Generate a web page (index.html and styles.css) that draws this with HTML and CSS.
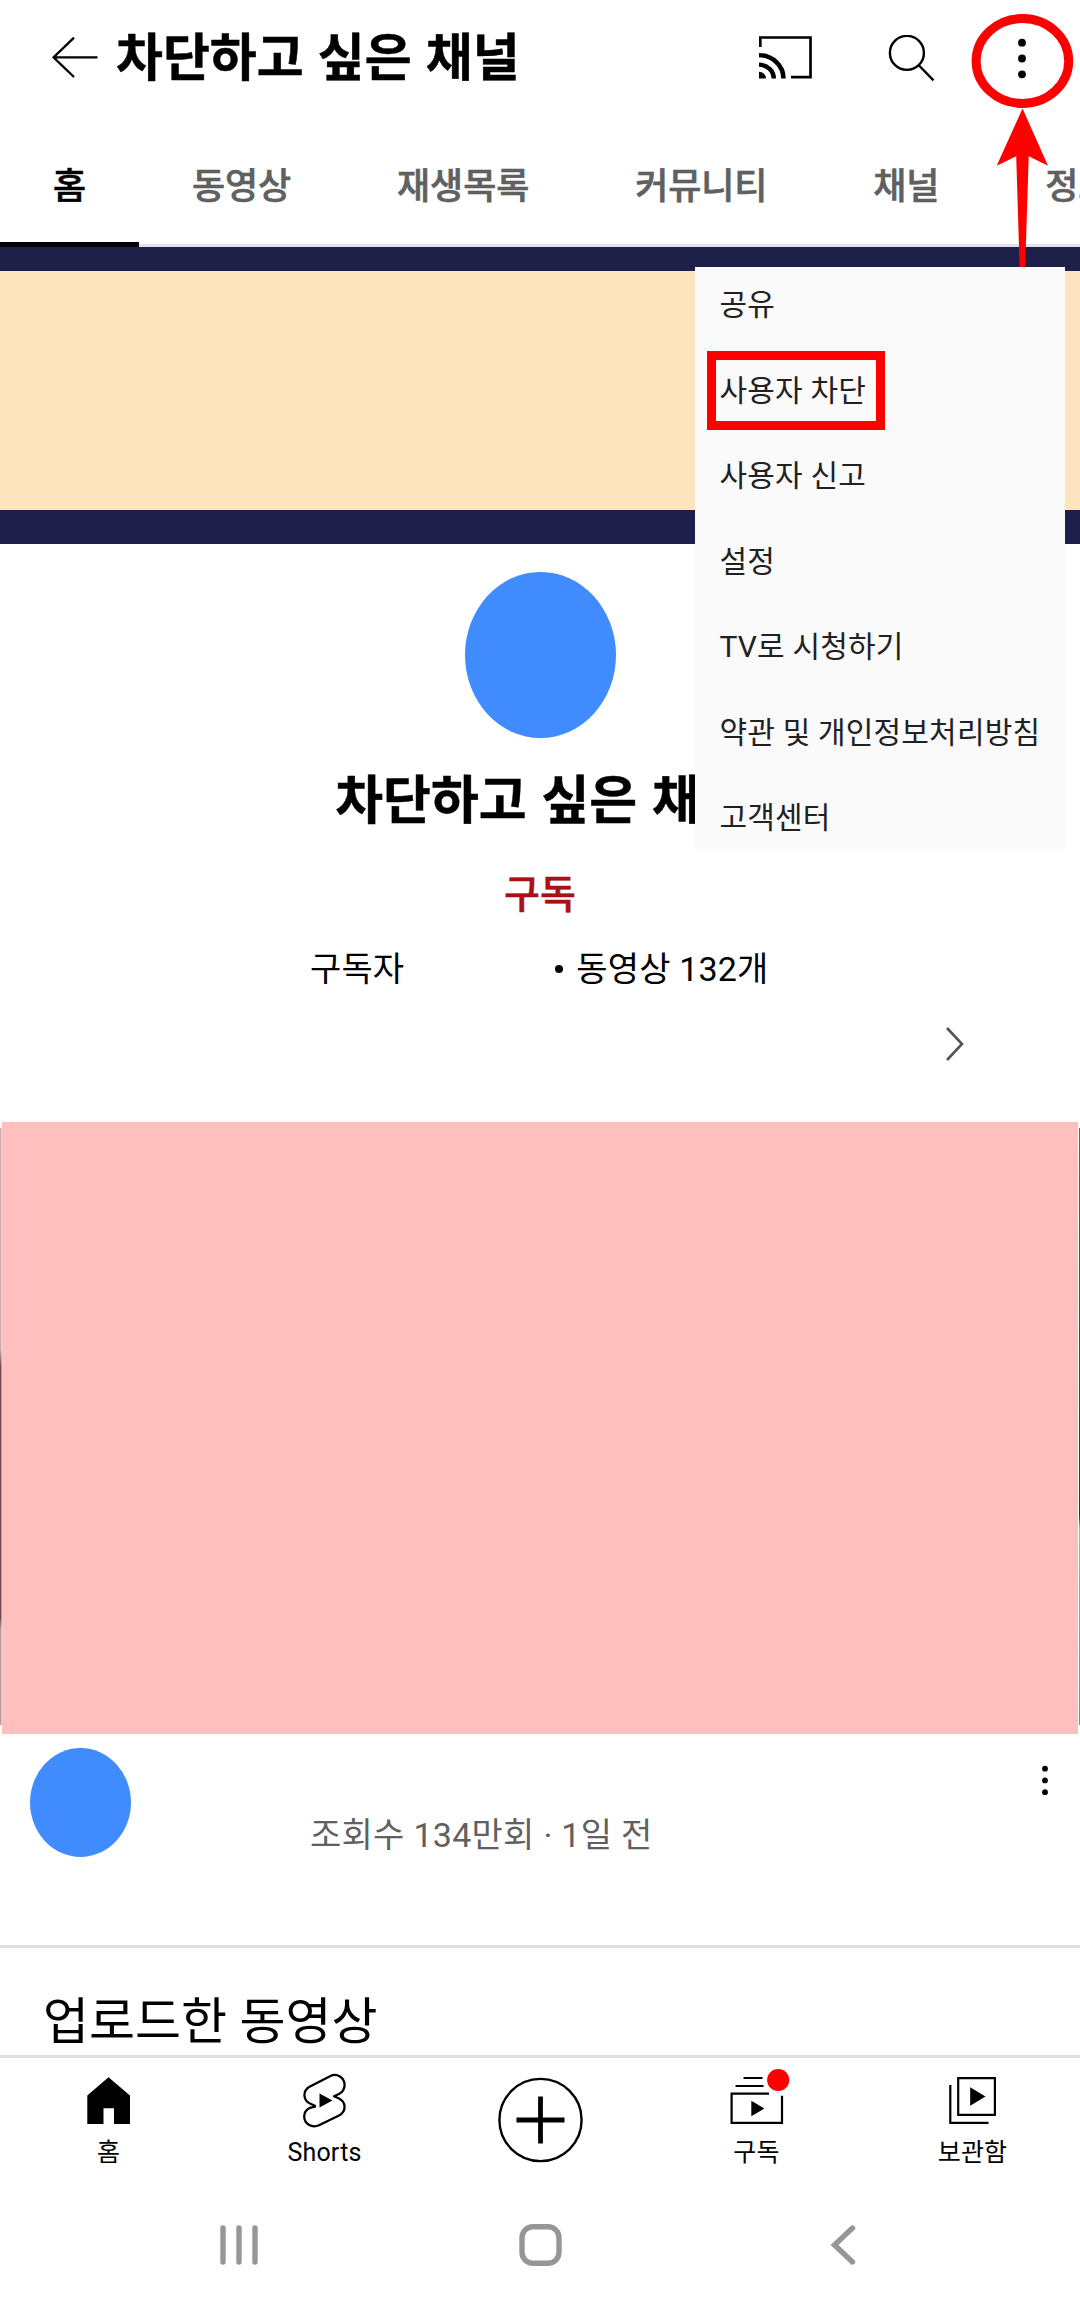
FILE: index.html
```html
<!DOCTYPE html>
<html lang="ko">
<head>
<meta charset="utf-8">
<title>차단하고 싶은 채널</title>
<link rel="stylesheet" href="styles.css">
</head>
<body>
<div class="screen">
  <header class="topbar">
    <svg class="icon-back" width="46" height="44" viewBox="0 0 46 44" fill="none" stroke="#000" stroke-width="2.3"><path d="M45.500 22.300H2M22 2.600 1.500 22.300 22 42"/></svg>
    <h1 class="topbar-title">차단하고 싶은 채널</h1>
    <svg class="icon-cast" width="53" height="43" viewBox="0 0 53 45" preserveAspectRatio="none" fill="none" stroke="#000"><path d="M1.300 11.500V1.500H51.500V43H32" stroke-width="2.700"/><path d="M0 20A25 24.500 0 0 1 24.500 44.500M0 30A15 14.500 0 0 1 14.800 44.500" stroke-width="4.600"/><path d="M0 37.500A7 7 0 0 1 7 44.500H0Z" fill="#000" stroke="none"/></svg>
    <svg class="icon-search" width="48" height="48" viewBox="0 0 48 48" fill="none" stroke="#000" stroke-width="2.400"><ellipse cx="18.900" cy="17.900" rx="17" ry="17"/><path d="M30.500 30 45.500 45.300"/></svg>
    <svg class="icon-more" width="8" height="42" viewBox="0 0 8 42"><circle cx="4" cy="4.700" r="3.900"/><circle cx="4" cy="20.500" r="3.900"/><circle cx="4" cy="36.300" r="3.900"/></svg>
  </header>
  <nav class="tabs">
    <span class="tab tab-active">홈</span><span class="tab">동영상</span><span class="tab">재생목록</span><span class="tab">커뮤니티</span><span class="tab">채널</span><span class="tab">정보</span>
  </nav>
  <div class="banner"></div>
  <section class="channel">
    <div class="avatar"></div>
    <h2 class="channel-name">차단하고 싶은 채널</h2>
    <div class="subscribe">구독</div>
    <div class="stats"><span>구독자</span><span class="bullet"></span><span>동영상 132개</span></div>
    <svg class="chevron" width="20" height="36" viewBox="0 0 20 36" fill="none" stroke="#555" stroke-width="2.600"><path d="M2 2 17 18 2 34"/></svg>
  </section>
  <div class="thumb"><div class="thumb-cover"></div></div>
  <section class="video">
    <div class="video-avatar"></div>
    <p class="video-meta">조회수 134만회 · 1일 전</p>
    <svg class="video-more" width="6" height="32" viewBox="0 0 6 32"><circle cx="3" cy="3.700" r="2.900"/><circle cx="3" cy="15.400" r="2.900"/><circle cx="3" cy="27.200" r="2.900"/></svg>
  </section>
  <h3 class="uploads">업로드한 동영상</h3>
  <nav class="bottom">
    <div class="item">
      <svg width="60" height="60" viewBox="0 0 60 60"><path d="M30.500 9.300 52 27.500V56H36V40.300H25.500V56H9.300V27.500Z"/></svg>
      <span>홈</span>
    </div>
    <div class="item">
      <svg width="60" height="60" viewBox="0 0 60 60"><path class="shorts-line" d="M21.800 38.300 16.500 35.800C8.500 32 8.500 22.500 16 18.500L36 8.200C43 4.600 50.600 9.500 50.600 17C50.600 21.500 48.500 24 45 26L40 28.300 44.500 30.300C52.500 34 52.500 43.500 45 47.500L25 57.300C17.500 60.500 10.200 55.500 10.200 48.500C10.200 44.500 12.500 41.500 16 39.800L21.800 38.300"/><path d="M25.500 25.500 38.500 32.500 25.500 39.500Z"/></svg>
      <span>Shorts</span>
    </div>
    <div class="item">
      <svg class="create" width="88" height="88" viewBox="0 0 88 88" fill="none" stroke="#000"><ellipse cx="44.500" cy="44" rx="41.100" ry="41.100" stroke-width="2.400"/><path d="M20.500 44H68.500M44.500 20.500V67.500" stroke-width="4.800"/></svg>
    </div>
    <div class="item">
      <svg width="60" height="60" viewBox="0 0 60 60"><path d="M17.500 10H36.500M9.500 18H37.500M43 25.600H5.600V54.900H56V27.700" fill="none" stroke="#000" stroke-width="2.200"/><path d="M25.300 32.700 38.300 40.500 25.300 48.200Z"/><circle cx="52.200" cy="12" r="11.100" fill="#f00"/></svg>
      <span>구독</span>
    </div>
    <div class="item">
      <svg width="60" height="60" viewBox="0 0 60 60"><path d="M16.200 10.100H52.900V46.900H16.200ZM8.300 17V54.900H46.500" fill="none" stroke="#000" stroke-width="2.200"/><path d="M28.200 19.300 43.500 28.500 28.200 37.700Z"/></svg>
      <span>보관함</span>
    </div>
  </nav>
  <nav class="system">
    <svg width="38" height="44" viewBox="0 0 38 44"><path d="M3 5V39M19 5V39M35 5V39"/></svg>
    <svg width="44" height="44" viewBox="0 0 44 44"><rect x="3" y="3.700" width="37" height="36.600" rx="11"/></svg>
    <svg width="26" height="44" viewBox="0 0 26 44"><path d="M22.500 5 4.500 22 22.500 39"/></svg>
  </nav>

  <svg class="pointer" width="110" height="280" viewBox="0 0 110 280"><ellipse cx="52.400" cy="61" rx="46.300" ry="42.500" fill="none" stroke="#f00" stroke-width="9"/><path d="M52.500 108.500 78 165.700 58.700 156.300 54.800 280H50L46.200 156.300 26.700 165.700Z" fill="#f00"/></svg>
  <ul class="menu">
    <li>공유</li><li><span class="marked">사용자 차단</span></li><li>사용자 신고</li><li>설정</li><li>TV로 시청하기</li><li>약관 및 개인정보처리방침</li><li>고객센터</li>
  </ul>
</div>
</body>
</html>
```
FILE: styles.css
```css
*, *::before { box-sizing: border-box; margin: 0; padding: 0; }
body { background: #fff; color: #000; font-family: Roboto, "Noto Sans CJK KR", sans-serif; }
svg { display: block; flex: none; }
.screen { position: relative; width: 1080px; height: 2307px; overflow: hidden; background: #fff; display: flex; flex-direction: column; }
.screen > * { flex: none; }

.topbar { height: 124px; display: flex; align-items: flex-start; padding-left: 52px; }
.icon-back { margin-top: 35px; }
.topbar-title { width: 420px; margin: 29px 0 0 18px; font-size: 51px; line-height: 60px; font-weight: 700; word-spacing: 1.5px; white-space: nowrap; -webkit-text-stroke: 0.5px; }
.icon-cast { margin: 36px 0 0 223px; }
.icon-search { margin: 35px 0 0 76px; }
.icon-more { margin: 38px 0 0 82px; }

.tabs { height: 123px; display: flex; border-bottom: 3px solid #e1e1e8; }
.tab { flex: none; height: 123px; padding: 0 53px; font-size: 36px; line-height: 127px; font-weight: 500; letter-spacing: -0.1px; color: #606060; white-space: nowrap; -webkit-text-stroke: 0.6px; }
.tab-active { color: #000; border-bottom: 5px solid #000; }

.banner { height: 297px; background: #ffe4c0; border: solid #1e204a; border-width: 24px 0 34px; }

.channel { height: 578px; display: flex; flex-direction: column; align-items: center; }
.avatar { width: 151px; height: 166px; margin-top: 28px; border-radius: 50%; background: #408cff; }
.channel-name { margin: 34px 0 0 3px; font-size: 52px; line-height: 60px; font-weight: 700; word-spacing: 2px; white-space: nowrap; -webkit-text-stroke: 0.5px; }
.subscribe { margin-top: 43px; font-size: 39px; line-height: 40px; font-weight: 500; color: #a81216; -webkit-text-stroke: 0.6px; }
.stats { width: 460px; margin-top: 34px; display: flex; align-items: center; font-size: 34px; line-height: 40px; letter-spacing: 0.15px; white-space: nowrap; }
.bullet { width: 8px; height: 8px; margin: 0 13px 0 151px; border-radius: 50%; background: #000; }
.chevron { margin: 37px 115px 0 0; align-self: flex-end; }

.thumb {
  height: 612px;
  padding: 0 2px;
  background:
    linear-gradient(#c4adab 37%, #6f4450 40%, #6f4450 82%, #b09c9b 84%) no-repeat 0 6px / 1.5px 597px,
    linear-gradient(#7a5652, #4a2626 65%, #c4a3a3 67%, #8f7f7f) no-repeat 100% 6px / 1.5px 597px;
}
.thumb-cover { height: 612px; background: #ffbfbf; }

.video { height: 214px; display: flex; align-items: flex-start; padding-left: 30px; border-bottom: 3px solid #e0e0e0; }
.video-avatar { width: 101px; height: 109px; margin-top: 14px; border-radius: 50%; background: #408cff; }
.video-meta { width: 700px; margin: 81px 0 0 179px; font-size: 34px; line-height: 40px; letter-spacing: 0.28px; color: #606060; }
.video-more { margin: 31px 0 0 32px; }

.uploads { height: 110px; padding-left: 43px; font-size: 50px; line-height: 148px; font-weight: 400; border-bottom: 3px solid #e0e0e0; }

.bottom { height: 130px; display: flex; }
.item { width: 216px; display: flex; flex-direction: column; align-items: center; padding-top: 10px; font-size: 25px; line-height: 36px; letter-spacing: 0.2px; }
.item svg { overflow: visible; }
.item span { margin: 7px 0 0 1px; }
.item .create { margin-top: 7.5px; }
.shorts-line { fill: none; stroke: #000; stroke-width: 2.3; stroke-linejoin: round; }

.system { height: 119px; display: flex; align-items: flex-start; padding: 35px 0 0 220px; }
.system svg { fill: none; stroke: #969696; stroke-width: 5.4; stroke-linecap: round; }
.system svg + svg { margin-left: 261px; }
.system svg:last-child { margin-left: 267px; }

.pointer { position: absolute; left: 970px; top: 0; }
.menu { position: absolute; left: 695px; top: 267px; width: 370px; height: 584px; padding: 18px 0 0 24.5px; display: flex; flex-direction: column; gap: 45.5px; list-style: none; background: #fafafa; color: #212121; font-size: 30px; line-height: 40px; letter-spacing: 0.17px; white-space: nowrap; }
.marked { position: relative; }
.marked::before { content: ""; position: absolute; left: -12.5px; top: 50%; width: 178px; height: 79px; margin-top: -39px; border: 9px solid #f00; }
```
